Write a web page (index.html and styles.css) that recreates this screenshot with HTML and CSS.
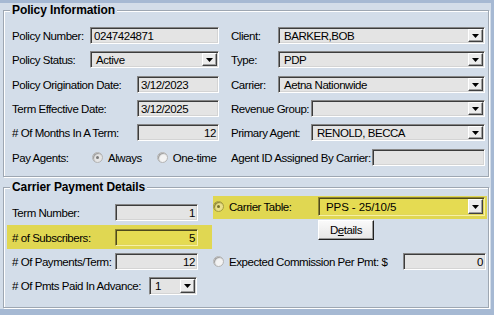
FILE: index.html
```html
<!DOCTYPE html>
<html>
<head>
<meta charset="utf-8">
<title>Policy</title>
<link rel="stylesheet" href="styles.css">
</head>
<body>
<div class="panel">
  <fieldset class="group policy">
    <legend>Policy Information</legend>
    <div class="policy-grid">
      <div class="row"><span class="lbl">Policy Number:</span><span class="field w129">0247424871</span></div>
      <div class="row"><span class="lbl">Client:</span><span class="select w207"><span class="val">BARKER,BOB</span><span class="arrow"><svg width="7" height="4" viewBox="0 0 7 4"><polygon points="0,0 7,0 3.5,4" fill="#000"/></svg></span></span></div>

      <div class="row"><span class="lbl">Policy Status:</span><span class="select w129"><span class="val">Active</span><span class="arrow"><svg width="7" height="4" viewBox="0 0 7 4"><polygon points="0,0 7,0 3.5,4" fill="#000"/></svg></span></span></div>
      <div class="row"><span class="lbl">Type:</span><span class="select w207"><span class="val">PDP</span><span class="arrow"><svg width="7" height="4" viewBox="0 0 7 4"><polygon points="0,0 7,0 3.5,4" fill="#000"/></svg></span></span></div>

      <div class="row"><span class="lbl">Policy Origination Date:</span><span class="field w82">3/12/2023</span></div>
      <div class="row"><span class="lbl">Carrier:</span><span class="select w207"><span class="val">Aetna Nationwide</span><span class="arrow"><svg width="7" height="4" viewBox="0 0 7 4"><polygon points="0,0 7,0 3.5,4" fill="#000"/></svg></span></span></div>

      <div class="row"><span class="lbl">Term Effective Date:</span><span class="field w82">3/12/2025</span></div>
      <div class="row"><span class="lbl">Revenue Group:</span><span class="select w174"><span class="val"></span><span class="arrow"><svg width="7" height="4" viewBox="0 0 7 4"><polygon points="0,0 7,0 3.5,4" fill="#000"/></svg></span></span></div>

      <div class="row"><span class="lbl"># Of Months In A Term:</span><span class="field w82 num">12</span></div>
      <div class="row"><span class="lbl">Primary Agent:</span><span class="select w174"><span class="val">RENOLD, BECCA</span><span class="arrow"><svg width="7" height="4" viewBox="0 0 7 4"><polygon points="0,0 7,0 3.5,4" fill="#000"/></svg></span></span></div>

      <div class="row"><span class="lbl fixed80">Pay Agents:</span><span class="opt"><span class="radio gray checked"></span><span>Always</span></span><span class="opt"><span class="radio"></span><span>One-time</span></span></div>
      <div class="row"><span class="lbl">Agent ID Assigned By Carrier:</span><span class="field w113"></span></div>
    </div>
  </fieldset>

  <fieldset class="group carrier">
    <legend>Carrier Payment Details</legend>
    <div class="carrier-grid">
      <div class="col">
        <div class="crow term"><span class="lbl l103">Term Number:</span><span class="field w83 num">1</span></div>
        <div class="band subs"><span class="lbl l103">#&nbsp;of Subscribers:</span><span class="field w83 num yellow">5</span></div>
        <div class="crow gap4"><span class="lbl l103"># Of Payments/Term:</span><span class="field w83 num">12</span></div>
        <div class="crow adv"><span class="lbl l137"># Of Pmts Paid In Advance:</span><span class="select w48 tall"><span class="val">1</span><span class="arrow"><svg width="7" height="4" viewBox="0 0 7 4"><polygon points="0,0 7,0 3.5,4" fill="#000"/></svg></span></span></div>
      </div>
      <div class="col">
        <div class="band ct"><span class="radio olive checked"></span><span class="rlbl">Carrier Table:</span><span class="select w167 big yellow"><span class="val">PPS - 25/10/5</span><span class="arrow"><svg width="7" height="4" viewBox="0 0 7 4"><polygon points="0,0 7,0 3.5,4" fill="#000"/></svg></span></span></div>
        <div class="btn-row"><span class="btn">D<u>e</u>tails</span></div>
        <div class="crow exp"><span class="radio"></span><span class="rlbl">Expected Commission Per Pmt: $</span><span class="field w83 num right1">0</span></div>
      </div>
    </div>
  </fieldset>
</div>
</body>
</html>
```

FILE: styles.css
```css
* { box-sizing: border-box; }

html, body {
  margin: 0;
  background: #a6b9d3;
}

body {
  font-family: "Liberation Sans", Arial, sans-serif;
  font-size: 11.5px;
  letter-spacing: -0.45px;
  color: #000;
}

.panel {
  margin-top: 3px;
  width: 491px;
  background: #d3dde9;
  padding: 0 0 1px 0;
  display: flow-root;
}

.group {
  margin: 0 0 0 3px;
  width: 486px;
  min-inline-size: auto;
  border: 1px solid #9ea7b2;
  box-shadow: inset 1px 1px 0 #fff, 1px 1px 0 #fff;
}

.group legend {
  font-weight: bold;
  font-size: 12px;
  line-height: 15px;
  letter-spacing: -0.1px;
  padding: 0 2px;
  margin-left: -2px;
  background: #d3dde9;
}

.policy { padding: 9px 3px 10px 8px; }
.carrier { margin-top: 3px; padding: 1px 1px 12px 8px; }

.policy-grid {
  display: grid;
  grid-template-columns: 207px 254px;
  grid-template-rows: 24px 25px 24px 24px 25px 17px;
  column-gap: 12px;
}

.row {
  display: flex;
  align-items: center;
  height: 17px;
  white-space: nowrap;
}

.row .field, .row .select { margin-left: auto; }

.lbl { white-space: nowrap; flex-shrink: 0; }
.fixed80 { width: 80px; }
.l103 { width: 103px; }
.l137 { width: 137px; }

.field {
  height: 17px;
  background: #e4e4e4;
  border: 1px solid;
  border-color: #868686 #fff #fff #868686;
  box-shadow: inset 1px 1px 0 #3c3c3c, inset -1px -1px 0 #d4d4d4;
  padding: 0 3px;
  display: flex;
  align-items: center;
  flex-shrink: 0;
}
.field.num { justify-content: flex-end; padding-right: 2px; }

.select {
  height: 17px;
  background: #e4e4e4;
  border: 1px solid;
  border-color: #868686 #fff #fff #868686;
  box-shadow: inset 1px 1px 0 #3c3c3c, inset -1px -1px 0 #d4d4d4;
  padding: 1px;
  display: flex;
  flex-shrink: 0;
}
.select .val {
  flex: 1;
  padding-left: 4px;
  display: flex;
  align-items: center;
  white-space: nowrap;
  overflow: hidden;
}
.select .arrow {
  width: 15px;
  background: #ececec;
  border: 1px solid;
  border-color: #fff #404040 #404040 #fff;
  box-shadow: inset -1px -1px 0 #a0a0a0;
  display: flex;
  align-items: center;
  justify-content: center;
}
.select .arrow svg { display: block; }

.select.tall { height: 18px; }
.select.big { height: 19px; }
.select.big .val { padding-left: 6px; letter-spacing: -0.1px; }

.yellow {
  background: #e5db52;
  border-color: #8d8434 #f6f0a8 #f6f0a8 #8d8434;
  box-shadow: inset 1px 1px 0 #4e4a1c, inset -1px -1px 0 #e0d65a;
}

.w48 { width: 48px; }
.w82 { width: 82px; }
.w83 { width: 83px; }
.w113 { width: 113px; }
.w129 { width: 129px; }
.w167 { width: 167px; }
.w174 { width: 174px; }
.w207 { width: 207px; }

.opt { display: flex; align-items: center; }
.opt .radio { margin-right: 5px; }
.opt + .opt { margin-left: 15px; }

.radio {
  width: 11px;
  height: 11px;
  border-radius: 50%;
  background: #f3f3f3;
  border: 1px solid #b4b4b4;
  box-shadow: inset 1px 1px 1px #9a9a9a;
  display: flex;
  align-items: center;
  justify-content: center;
  flex-shrink: 0;
}
.radio.gray { background: #e6e6e6; }
.radio.checked::after {
  content: "";
  width: 3px;
  height: 3px;
  border-radius: 50%;
  background: #7a7a7a;
}
.radio.olive {
  background: #e9e08a;
  border-color: #a59c3c;
  box-shadow: inset 1px 1px 1px #8a8230;
}
.radio.olive::after { background: #77702a; }

.carrier-grid {
  display: grid;
  grid-template-columns: 200px 274px;
  column-gap: 1px;
  align-items: start;
}

.col { display: flex; flex-direction: column; }

.crow {
  display: flex;
  align-items: center;
  height: 17px;
  white-space: nowrap;
}
.crow.term { margin-top: 8px; }
.crow.gap4 { margin-top: 4px; }
.crow.adv { margin-top: 7px; height: 18px; }

.band {
  background: #e0d752;
  display: flex;
  align-items: center;
}
.band.subs {
  margin: 4px 0 0 -5px;
  padding: 4px 0 3px 5px;
  width: 205px;
  height: 24px;
}
.band.ct {
  height: 23px;
  padding: 1px 2px 3px 0;
}
.band.ct .select { margin-left: auto; }

.rlbl { margin-left: 5px; white-space: nowrap; }

.btn-row { display: flex; margin-top: 1px; padding-left: 105px; }
.btn {
  width: 56px;
  height: 20px;
  background: linear-gradient(#fafafa, #e6e6e6);
  border: 1px solid;
  border-color: #fff #202020 #202020 #fff;
  box-shadow: inset -1px -1px 0 #9a9a9a;
  display: flex;
  align-items: center;
  justify-content: center;
}
.btn u { text-underline-offset: 1px; }

.crow.exp { margin-top: 13px; }
.crow.exp .field { margin-left: auto; }
.right1 { margin-right: 1px; }
```
